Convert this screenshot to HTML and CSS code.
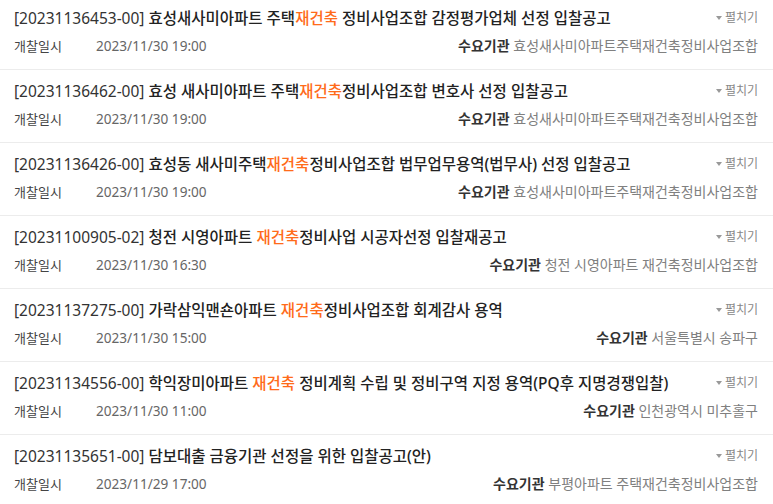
FILE: index.html
```html
<!DOCTYPE html>
<html lang="ko">
<head>
<meta charset="utf-8">
<link rel="stylesheet" href="styles.css">
</head>
<body>
<ul class="list">
  <li class="item">
    <div class="top">
      <div class="title"><span class="no">[20231136453-00]</span> 효성새사미아파트 주택<em>재건축</em> 정비사업조합 감정평가업체 선정 입찰공고</div>
      <span class="toggle">펼치기</span>
    </div>
    <div class="meta">
      <div class="date"><span class="lbl">개찰일시</span><span class="val">2023/11/30 19:00</span></div>
      <div class="org"><b>수요기관</b> 효성새사미아파트주택재건축정비사업조합</div>
    </div>
  </li>
  <li class="item">
    <div class="top">
      <div class="title"><span class="no">[20231136462-00]</span> 효성 새사미아파트 주택<em>재건축</em>정비사업조합 변호사 선정 입찰공고</div>
      <span class="toggle">펼치기</span>
    </div>
    <div class="meta">
      <div class="date"><span class="lbl">개찰일시</span><span class="val">2023/11/30 19:00</span></div>
      <div class="org"><b>수요기관</b> 효성새사미아파트주택재건축정비사업조합</div>
    </div>
  </li>
  <li class="item">
    <div class="top">
      <div class="title"><span class="no">[20231136426-00]</span> 효성동 새사미주택<em>재건축</em>정비사업조합 법무업무용역(법무사) 선정 입찰공고</div>
      <span class="toggle">펼치기</span>
    </div>
    <div class="meta">
      <div class="date"><span class="lbl">개찰일시</span><span class="val">2023/11/30 19:00</span></div>
      <div class="org"><b>수요기관</b> 효성새사미아파트주택재건축정비사업조합</div>
    </div>
  </li>
  <li class="item">
    <div class="top">
      <div class="title"><span class="no">[20231100905-02]</span> 청전 시영아파트 <em>재건축</em>정비사업 시공자선정 입찰재공고</div>
      <span class="toggle">펼치기</span>
    </div>
    <div class="meta">
      <div class="date"><span class="lbl">개찰일시</span><span class="val">2023/11/30 16:30</span></div>
      <div class="org"><b>수요기관</b> 청전 시영아파트 재건축정비사업조합</div>
    </div>
  </li>
  <li class="item">
    <div class="top">
      <div class="title"><span class="no">[20231137275-00]</span> 가락삼익맨숀아파트 <em>재건축</em>정비사업조합 회계감사 용역</div>
      <span class="toggle">펼치기</span>
    </div>
    <div class="meta">
      <div class="date"><span class="lbl">개찰일시</span><span class="val">2023/11/30 15:00</span></div>
      <div class="org"><b>수요기관</b> 서울특별시 송파구</div>
    </div>
  </li>
  <li class="item">
    <div class="top">
      <div class="title"><span class="no">[20231134556-00]</span> 학익장미아파트 <em>재건축</em> 정비계획 수립 및 정비구역 지정 용역(PQ후 지명경쟁입찰)</div>
      <span class="toggle">펼치기</span>
    </div>
    <div class="meta">
      <div class="date"><span class="lbl">개찰일시</span><span class="val">2023/11/30 11:00</span></div>
      <div class="org"><b>수요기관</b> 인천광역시 미추홀구</div>
    </div>
  </li>
  <li class="item">
    <div class="top">
      <div class="title"><span class="no">[20231135651-00]</span> 담보대출 금융기관 선정을 위한 입찰공고(안)</div>
      <span class="toggle">펼치기</span>
    </div>
    <div class="meta">
      <div class="date"><span class="lbl">개찰일시</span><span class="val">2023/11/29 17:00</span></div>
      <div class="org"><b>수요기관</b> 부평아파트 주택재건축정비사업조합</div>
    </div>
  </li>
</ul>
</body>
</html>
```

FILE: styles.css
```css
* { box-sizing: border-box; }
html, body { margin: 0; padding: 0; background: #fff; }
body {
  font-family: "Noto Sans", "Noto Sans CJK KR", sans-serif;
  color: #222;
  width: 773px;
  height: 504px;
  overflow: hidden;
}
.list {
  list-style: none;
  margin: -3px 0 0 0;
  padding: 0;
}
.item {
  height: 73px;
  border-bottom: 1px solid #ececec;
  padding: 11px 15px 0 14px;
}
.top {
  display: flex;
  justify-content: space-between;
  align-items: center;
  height: 20px;
}
.title {
  font-size: 15.5px;
  line-height: 20px;
  font-weight: 500;
  color: #222;
  white-space: nowrap;
}
.title .no { font-weight: 400; color: #333; }
.title em { font-style: normal; color: #ff6b1a; }
.toggle {
  font-size: 12px;
  color: #888;
  display: flex;
  align-items: center;
  gap: 3px;
  line-height: 14px;
}
.toggle::before {
  content: "";
  width: 0;
  height: 0;
  border-left: 3.5px solid transparent;
  border-right: 3.5px solid transparent;
  border-top: 4px solid #999;
}
.meta {
  display: flex;
  justify-content: space-between;
  align-items: center;
  margin-top: 9px;
  height: 18px;
  font-size: 14px;
  line-height: 18px;
}
.date { display: flex; }
.lbl { width: 82px; font-size: 13px; color: #444; }
.val { color: #666; font-size: 13.6px; }
.org { color: #808080; }
.org b { color: #333; font-weight: 700; }
```
